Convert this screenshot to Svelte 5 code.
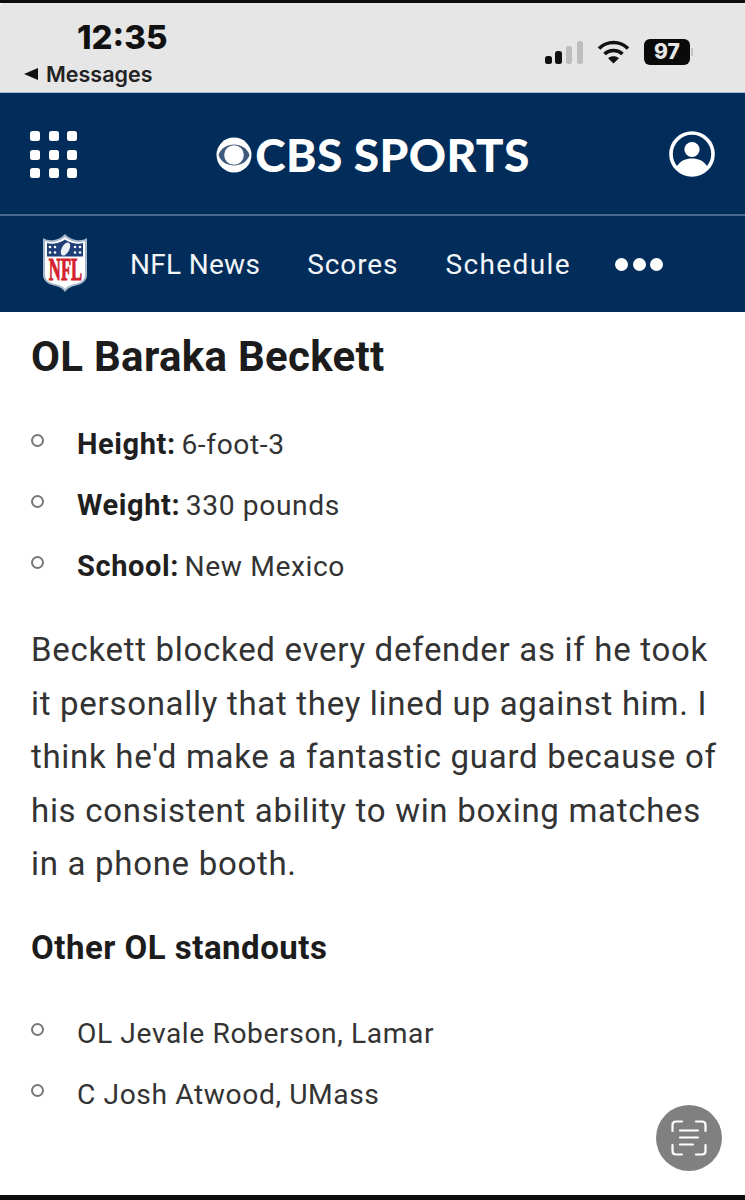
<script>
  const specs = [
    { label: 'Height:', value: '6-foot-3' },
    { label: 'Weight:', value: '330 pounds' },
    { label: 'School:', value: 'New Mexico' }
  ];
  const others = ['OL Jevale Roberson, Lamar', 'C Josh Atwood, UMass'];
  const dots = Array.from({ length: 9 });
</script>

<div class="page">
  <div class="status">
    <div class="status-left">
      <div class="time">12:35</div>
      <div class="back"><span class="tri"></span>Messages</div>
    </div>
    <div class="status-right">
      <svg width="38" height="23" viewBox="0 0 38 23">
        <rect x="0" y="15" width="7" height="8" rx="2.500" fill="#111"/>
        <rect x="10" y="10" width="7" height="13" rx="2.500" fill="#111"/>
        <rect x="21" y="5" width="6" height="18" rx="2.500" fill="#bdbdbd"/>
        <rect x="32" y="0" width="6" height="23" rx="2.500" fill="#bdbdbd"/>
      </svg>
      <svg class="wifi" width="33" height="24" viewBox="0 0 32 24" fill="none" stroke="#111" stroke-width="3.600">
        <path d="M1.500 8.500 C9.500 0.500 22.500 0.500 30.500 8.500"/>
        <path d="M7 14 C12 9.300 20 9.300 25 14"/>
        <path d="M16 23.500 L10.600 18.200 C13.600 15.600 18.400 15.600 21.400 18.200 Z" fill="#111" stroke="none"/>
      </svg>
      <div class="battery">97</div>
      <span class="nub"></span>
    </div>
  </div>

  <header class="nav">
    <div class="top">
      <div class="grid">
        {#each dots as _}<span></span>{/each}
      </div>
      <div class="logo">
        <svg width="36" height="36" viewBox="0 0 36 36">
          <circle cx="18" cy="18" r="17.500" fill="#fff"/>
          <path d="M2.500 18 C7 4 29 4 33.500 18 C29 32 7 32 2.500 18 Z" fill="#3f5a7c"/>
          <circle cx="18" cy="18" r="9.800" fill="#fff"/>
        </svg>
        <span>CBS SPORTS</span>
      </div>
      <svg class="user" width="46" height="46" viewBox="0 0 46 46">
        <circle cx="23" cy="23" r="21" fill="none" stroke="#fff" stroke-width="3.600"/>
        <circle cx="23" cy="18.500" r="7.600" fill="#fff"/>
        <path d="M7.500 36 C11 29.500 17 27.500 23 27.500 C29 27.500 35 29.500 38.500 36 C34.500 41 29 44 23 44 C17 44 11.500 41 7.500 36 Z" fill="#fff"/>
      </svg>
    </div>
    <nav class="sub">
      <svg class="shield" width="48" height="60" viewBox="0 0 48 60">
        <path d="M24 1 C21 4 17 6.500 13 7 C9 7.500 5 7 2 5 L2 42 C2 49 9 52 15 53 C19 54 22 56 24 59 C26 56 29 54 33 53 C39 52 46 49 46 42 L46 5 C43 7 39 7.500 35 7 C31 6.500 27 4 24 1 Z" fill="#a7b8cc"/>
        <path d="M24 4 C21 6.500 17 8.500 13 9 C9.500 9.500 6.500 9 4 8 L4 42 C4 47.500 10 50.500 15.500 51.300 C19 52 22 53.500 24 56 C26 53.500 29 52 32.500 51.300 C38 50.500 44 47.500 44 42 L44 8 C41.500 9 38.500 9.500 35 9 C31 8.500 27 6.500 24 4 Z" fill="#fff"/>
        <path d="M24 6.500 C21 8.500 17.500 10 13.500 10.500 C10.500 11 8 10.700 6 10 L6 23.500 L42 23.500 L42 10 C40 10.700 37.500 11 34.500 10.500 C30.500 10 27 8.500 24 6.500 Z" fill="#1f3f78"/>
        <ellipse cx="24.500" cy="16" rx="3.800" ry="7.200" transform="rotate(28 24.500 16)" fill="#eceff3"/>
        <g fill="#fff">
          <circle cx="9" cy="14" r="1.300"/><circle cx="14" cy="14" r="1.300"/><circle cx="34" cy="14" r="1.300"/><circle cx="39" cy="14" r="1.300"/>
          <circle cx="9" cy="19.500" r="1.300"/><circle cx="14" cy="19.500" r="1.300"/><circle cx="34" cy="19.500" r="1.300"/><circle cx="39" cy="19.500" r="1.300"/>
        </g>
        <text transform="translate(24.500 47) scale(0.52 1)" text-anchor="middle" font-family="'Liberation Serif', serif" font-weight="700" font-size="32" fill="#d3202a" stroke="#d3202a" stroke-width="1">NFL</text>
      </svg>
      <a class="tight" href="#n">NFL News</a>
      <a href="#s">Scores</a>
      <a class="wide" href="#c">Schedule</a>
      <div class="more"><span></span><span></span><span></span></div>
    </nav>
  </header>

  <main class="content">
    <h2>OL Baraka Beckett</h2>
    <ul class="specs">
      {#each specs as s}
        <li><strong>{s.label}</strong> {s.value}</li>
      {/each}
    </ul>
    <p>Beckett blocked every defender as if he took it personally that they lined up against him. I think he'd make a fantastic guard because of his consistent ability to win boxing matches in a phone booth.</p>
    <h3>Other OL standouts</h3>
    <ul class="others">
      {#each others as o}<li>{o}</li>{/each}
    </ul>
  </main>

  <div class="endbar"></div>

  <div class="fab">
    <svg width="36" height="36" viewBox="0 0 36 36" fill="none" stroke="#fff" stroke-width="2.200" stroke-linecap="round">
      <path d="M1.500 11 V5 Q1.500 1.500 5 1.500 H11"/>
      <path d="M25 1.500 H31 Q34.500 1.500 34.500 5 V11"/>
      <path d="M1.500 25 V31 Q1.500 34.500 5 34.500 H11"/>
      <path d="M34.500 25 V31 Q34.500 34.500 31 34.500 H25"/>
      <path d="M9 10.500 H27 M9 17.500 H27 M9 24.500 H22"/>
    </svg>
  </div>
</div>

<style>
  :global(body) { margin: 0; background: #fff; }
  .page {
    position: relative;
    width: 745px;
    height: 1200px;
    display: flex;
    flex-direction: column;
    overflow: hidden;
    font-family: Roboto, "Liberation Sans", sans-serif;
    color: #2b2b2b;
    background: #fff;
    border-top: 3px solid #0c0c0c;
    box-sizing: border-box;
  }
  .status {
    height: 89px;
    flex: none;
    background: #e6e6e6;
    display: flex;
    justify-content: space-between;
    border-bottom: 1px solid #a9bdd0;
    box-sizing: content-box;
    border-top-left-radius: 4px;
    border-top-right-radius: 4px;
  }
  .status-left { padding-left: 24px; }
  .time {
    font-family: Inter, "Liberation Sans", sans-serif;
    font-weight: 800;
    font-size: 33px;
    line-height: 36px;
    margin: 16px 0 0 53px;
    color: #111;
  }
  .back {
    display: flex;
    align-items: center;
    gap: 8px;
    font-family: Inter, "Liberation Sans", sans-serif;
    font-weight: 600;
    font-size: 21.500px;
    line-height: 24px;
    margin-top: 7px;
    color: #222;
  }
  .tri {
    width: 0;
    height: 0;
    border-style: solid;
    border-width: 6.500px 14px 6.500px 0;
    border-color: transparent #111 transparent transparent;
  }
  .status-right {
    display: flex;
    align-items: center;
    gap: 14px;
    padding: 36px 55px 0 0;
    height: 26px;
    position: relative;
  }
  .battery {
    width: 46px;
    height: 26px;
    background: #0a0a0a;
    border-radius: 6px;
    color: #e6e6e6;
    font-family: Inter, "Liberation Sans", sans-serif;
    font-weight: 800;
    font-size: 21px;
    line-height: 26px;
    text-align: center;
  }
  .nub {
    position: absolute;
    right: 52px;
    top: 45px;
    width: 2px;
    height: 8px;
    background: #c4c4c4;
  }
  .nav { background: #022d5a; flex: none; color: #fff; }
  .top {
    height: 121px;
    display: flex;
    align-items: center;
    justify-content: space-between;
    padding: 0 30px;
    border-bottom: 2px solid #48688f;
    box-sizing: content-box;
  }
  .grid {
    display: grid;
    grid-template-columns: repeat(3, 10px);
    grid-auto-rows: 10px;
    gap: 8.500px;
    width: 47px;
    margin-top: 2px;
  }
  .grid span { background: #fff; border-radius: 2.500px; }
  .logo {
    display: flex;
    align-items: center;
    gap: 3px;
    margin-top: 2px;
    font-family: Lato, "Open Sans", sans-serif;
    font-weight: 900;
    font-size: 46px;
    letter-spacing: 0.350px;
    color: #fff;
    line-height: 1;
    white-space: nowrap;
  }
  .sub {
    height: 96px;
    display: flex;
    align-items: center;
    padding-left: 41px;
  }
  .shield { margin-right: 41px; flex: none; margin-top: -2px; }
  .sub a {
    color: #f2f5f8;
    text-decoration: none;
    font-size: 28px;
    letter-spacing: 0.900px;
    margin-right: 47px;
    white-space: nowrap;
    font-family: Roboto, sans-serif;
  }
  .sub a.tight { letter-spacing: 0.300px; }
  .sub a.wide { letter-spacing: 1.400px; margin-right: 44px; }
  .more { display: flex; gap: 4.500px; }
  .more span { width: 13px; height: 13px; border-radius: 50%; background: #fff; }
  .content { flex: 1; padding: 0 15px 0 31px; overflow: hidden; }
  h2 {
    margin: 21px 0 0;
    font-size: 42px;
    line-height: 48px;
    font-weight: 700;
    color: #1c1c1c;
    letter-spacing: 0.300px;
  }
  ul { list-style: none; margin: 0; padding: 0; }
  li {
    position: relative;
    padding-left: 46px;
    font-size: 28.200px;
    line-height: 61px;
    letter-spacing: 0.600px;
    color: #333;
    white-space: nowrap;
  }
  li::before {
    content: "";
    position: absolute;
    left: 0;
    top: 20px;
    width: 13px;
    height: 13px;
    border: 2px solid #777;
    border-radius: 50%;
    box-sizing: border-box;
  }
  li strong { color: #1f1f1f; font-weight: 700; font-size: 29px; margin-right: -2px; }
  .specs { margin-top: 33px; }
  p {
    margin: 26px 0 0;
    font-size: 33px;
    line-height: 53.500px;
    letter-spacing: 0.700px;
    color: #333;
  }
  h3 {
    margin: 37px 0 0;
    font-size: 33px;
    line-height: 40px;
    font-weight: 700;
    color: #1c1c1c;
    letter-spacing: 0.500px;
  }
  .others { margin-top: 35px; }
  .endbar { height: 5px; background: #0c0c0c; flex: none; }
  .fab {
    position: absolute;
    left: 656px;
    top: 1102px;
    width: 66px;
    height: 66px;
    border-radius: 50%;
    background: #808080;
    display: flex;
    align-items: center;
    justify-content: center;
  }
</style>
